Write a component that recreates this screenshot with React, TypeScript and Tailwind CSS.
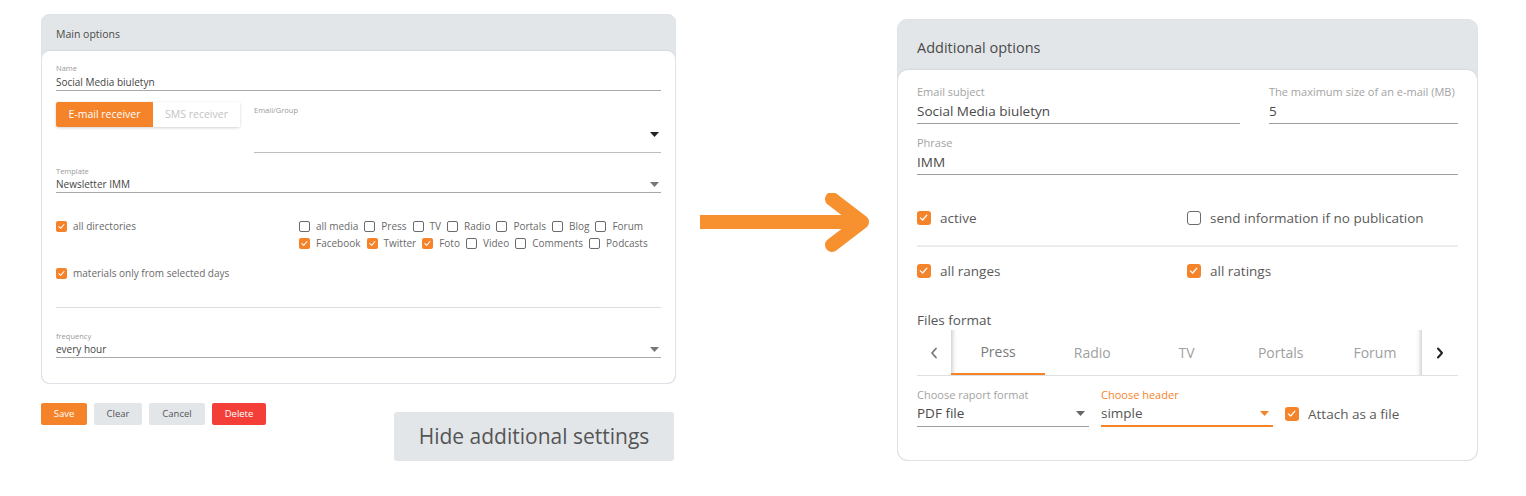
import React from 'react';

const font = { fontFamily: '"Open Sans", "Liberation Sans", sans-serif' };

function Check({ checked, size = 'sm' }: { checked?: boolean; size?: 'sm' | 'md' }) {
  const box = size === 'sm' ? 'w-[11px] h-[11px] rounded-[2px]' : 'w-[14px] h-[14px] rounded-[3px]';
  if (!checked) {
    return <span className={`${box} shrink-0 border-[1.5px] border-[#6b6b6b] bg-white`} />;
  }
  return (
    <span className={`${box} shrink-0 bg-[#f5832a] flex items-center justify-center`}>
      <svg viewBox="0 0 12 12" className="w-[80%] h-[80%]" fill="none" stroke="#fff" strokeWidth="1.4" strokeLinecap="round" strokeLinejoin="round">
        <path d="M2.5 6.3 L5 8.6 L9.5 3.4" />
      </svg>
    </span>
  );
}

function Caret({ color = '#555' }: { color?: string }) {
  return (
    <svg width="9" height="5" viewBox="0 0 9 5" className="shrink-0">
      <path d="M0 0 H9 L4.5 5 Z" fill={color} />
    </svg>
  );
}

function SmallCheck({ label, checked }: { label: string; checked?: boolean }) {
  return (
    <span className="flex items-center gap-[6px] text-[10px] leading-[12px] text-[#6a6a6a]">
      <Check checked={checked} />
      {label}
    </span>
  );
}

function MainOptions() {
  return (
    <div className="w-[635px] h-[370px] rounded-[8px] border border-[#dfe2e6] bg-[#e3e6e9] flex flex-col overflow-hidden">
      <div className="h-[36px] shrink-0 flex items-center px-[14px] pt-[3px] text-[10.5px] text-[#4a4a4a]">Main options</div>
      <div className="flex-1 bg-white rounded-[8px] shadow-[0_-1px_2px_rgba(0,0,0,0.06)] px-[14px] pt-[12px]">
        <div className="border-b border-[#a9a9a9] pb-[1px]">
          <div className="text-[7.5px] leading-[10px] text-[#9a9a9a]">Name</div>
          <div className="text-[10px] leading-[14px] mt-[2px] text-[#444]">Social Media biuletyn</div>
        </div>

        <div className="flex items-start gap-[14px] mt-[11px]">
          <div className="flex shadow-[0_1px_3px_rgba(0,0,0,0.18)] rounded-[2px]">
            <span className="w-[97px] h-[25px] flex items-center justify-center bg-[#f5832a] text-white text-[10.5px] rounded-l-[2px]">E-mail receiver</span>
            <span className="w-[87px] h-[25px] flex items-center justify-center bg-white text-[#c3c3c3] text-[10.5px]">SMS receiver</span>
          </div>
          <div className="flex-1 h-[51px] border-b border-[#bdbdbd] flex flex-col">
            <div className="text-[7.5px] leading-[10px] text-[#9a9a9a] mt-[3px]">Email/Group</div>
            <div className="flex justify-end mt-[17px] pr-[2px]">
              <Caret color="#222" />
            </div>
          </div>
        </div>

        <div className="border-b border-[#a9a9a9] mt-[13px] pb-[1px]">
          <div className="text-[7.5px] leading-[10px] text-[#9a9a9a]">Template</div>
          <div className="flex items-center justify-between pr-[2px] mt-[1px]">
            <span className="text-[10px] leading-[14px] text-[#444]">Newsletter IMM</span>
            <Caret color="#777" />
          </div>
        </div>

        <div className="flex mt-[27px]">
          <div className="w-[243px] flex flex-col gap-[35px]">
            <SmallCheck label="all directories" checked />
            <SmallCheck label="materials only from selected days" checked />
          </div>
          <div className="flex flex-col gap-[5px]">
            <div className="flex gap-[6px]">
              <SmallCheck label="all media" />
              <SmallCheck label="Press" />
              <SmallCheck label="TV" />
              <SmallCheck label="Radio" />
              <SmallCheck label="Portals" />
              <SmallCheck label="Blog" />
              <SmallCheck label="Forum" />
            </div>
            <div className="flex gap-[6px]">
              <SmallCheck label="Facebook" checked />
              <SmallCheck label="Twitter" checked />
              <SmallCheck label="Foto" checked />
              <SmallCheck label="Video" />
              <SmallCheck label="Comments" />
              <SmallCheck label="Podcasts" />
            </div>
          </div>
        </div>

        <div className="border-t border-[#dedede] mt-[28px]" />

        <div className="border-b border-[#a9a9a9] mt-[23px] pb-[1px]">
          <div className="text-[7.5px] leading-[10px] text-[#9a9a9a]">frequency</div>
          <div className="flex items-center justify-between pr-[2px] mt-[1px]">
            <span className="text-[10px] leading-[14px] text-[#444]">every hour</span>
            <Caret color="#777" />
          </div>
        </div>
      </div>
    </div>
  );
}

function Field({ label, value, className = '' }: { label: string; value: string; className?: string }) {
  return (
    <div className={`border-b border-[#9e9e9e] pb-[3px] ${className}`}>
      <div className="text-[11px] leading-[14px] text-[#a3a3a3]">{label}</div>
      <div className="text-[13.5px] leading-[18px] mt-[3px] text-[#4a4a4a]">{value}</div>
    </div>
  );
}

function BigCheck({ label, checked }: { label: string; checked?: boolean }) {
  return (
    <span className="flex items-center gap-[9px] text-[13.5px] leading-[18px] text-[#5a5a5a]">
      <Check checked={checked} size="md" />
      {label}
    </span>
  );
}

function AdditionalOptions() {
  const tabs = ['Press', 'Radio', 'TV', 'Portals', 'Forum'];
  return (
    <div className="w-[581px] h-[442px] rounded-[10px] border border-[#dfe2e6] bg-[#e3e6e9] flex flex-col overflow-hidden">
      <div className="h-[50px] shrink-0 flex items-center px-[19px] pt-[6px] text-[14.5px] text-[#4a4a4a]">Additional options</div>
      <div className="flex-1 bg-white rounded-[10px] shadow-[0_-1px_2px_rgba(0,0,0,0.06)] px-[19px] pt-[15px]">
        <div className="flex gap-[29px]">
          <Field label="Email subject" value="Social Media biuletyn" className="w-[323px]" />
          <Field label="The maximum size of an e-mail (MB)" value="5" className="flex-1" />
        </div>
        <Field label="Phrase" value="IMM" className="mt-[12px]" />

        <div className="grid grid-cols-[270px_1fr] mt-[34px]">
          <BigCheck label="active" checked />
          <BigCheck label="send information if no publication" />
        </div>
        <div className="border-t-[2px] border-[#ececec] mt-[18px]" />
        <div className="grid grid-cols-[270px_1fr] mt-[15px]">
          <BigCheck label="all ranges" checked />
          <BigCheck label="all ratings" checked />
        </div>

        <div className="text-[13.5px] leading-[18px] text-[#555] mt-[31px]">Files format</div>

        <div className="flex items-stretch h-[46px] mt-[1px] border-b border-[#e0e0e0]">
          <div className="w-[34px] flex items-center justify-center">
            <svg width="8" height="12" viewBox="0 0 8 12"><path d="M6 1.5 L2 6 L6 10.5" fill="none" stroke="#777" strokeWidth="1.8" strokeLinecap="round" strokeLinejoin="round" /></svg>
          </div>
          <div className="flex w-[471px] shadow-[inset_6px_0_5px_-5px_rgba(0,0,0,0.25),inset_-6px_0_5px_-5px_rgba(0,0,0,0.25)]">
            {tabs.map((t, i) => (
              <div
                key={t}
                className={`flex-1 flex items-center justify-center text-[14px] ${i === 0 ? 'text-[#7a7a7a] border-b-2 border-[#f5832a]' : 'text-[#a0a0a0]'}`}
              >
                {t}
              </div>
            ))}
          </div>
          <div className="w-[35px] flex items-center justify-center">
            <svg width="8" height="12" viewBox="0 0 8 12"><path d="M2 1.5 L6 6 L2 10.5" fill="none" stroke="#222" strokeWidth="2" strokeLinecap="round" strokeLinejoin="round" /></svg>
          </div>
        </div>

        <div className="flex items-start gap-[12px] mt-[12px]">
          <div className="w-[172px] border-b border-[#9e9e9e] pb-[4px]">
            <div className="text-[11px] leading-[14px] text-[#a3a3a3]">Choose raport format</div>
            <div className="flex items-center justify-between pr-[4px] mt-[2px]">
              <span className="text-[13.5px] leading-[18px] text-[#4a4a4a]">PDF file</span>
              <Caret color="#666" />
            </div>
          </div>
          <div className="w-[172px] border-b-2 border-[#f5832a] pb-[3px]">
            <div className="text-[11px] leading-[14px] text-[#f5832a]">Choose header</div>
            <div className="flex items-center justify-between pr-[4px] mt-[2px]">
              <span className="text-[13.5px] leading-[18px] text-[#555]">simple</span>
              <Caret color="#f5832a" />
            </div>
          </div>
          <div className="mt-[17px]">
            <BigCheck label="Attach as a file" checked />
          </div>
        </div>
      </div>
    </div>
  );
}

export default function App() {
  return (
    <div className="w-[1526px] h-[496px] bg-white flex" style={font}>
      <div className="ml-[41px] mt-[14px] flex flex-col">
        <MainOptions />
        <div className="flex justify-between items-start">
          <div className="flex gap-[7px] mt-[19px]">
            <button className="w-[46px] h-[22px] rounded-[2px] bg-[#f5832a] text-white text-[9.5px]">Save</button>
            <button className="w-[48px] h-[22px] rounded-[2px] bg-[#e3e6e9] text-[#555] text-[9.5px]">Clear</button>
            <button className="w-[56px] h-[22px] rounded-[2px] bg-[#e3e6e9] text-[#555] text-[9.5px]">Cancel</button>
            <button className="w-[54px] h-[22px] rounded-[2px] bg-[#f33f38] text-white text-[9.5px]">Delete</button>
          </div>
          <button className="mt-[28px] mr-[2px] w-[280px] h-[49px] rounded-[3px] bg-[#e3e6e9] text-[#555] text-[21px]">
            Hide additional settings
          </button>
        </div>
      </div>

      <svg width="172" height="60" viewBox="0 0 172 60" className="ml-[24px] mt-[193px] shrink-0">
        <path d="M0 29 H160" stroke="#f7902f" strokeWidth="14" />
        <path d="M132 6 L162 29 L132 52" fill="none" stroke="#f7902f" strokeWidth="14" strokeLinecap="round" strokeLinejoin="round" />
      </svg>

      <div className="ml-[25px] mt-[19px]">
        <AdditionalOptions />
      </div>
    </div>
  );
}
